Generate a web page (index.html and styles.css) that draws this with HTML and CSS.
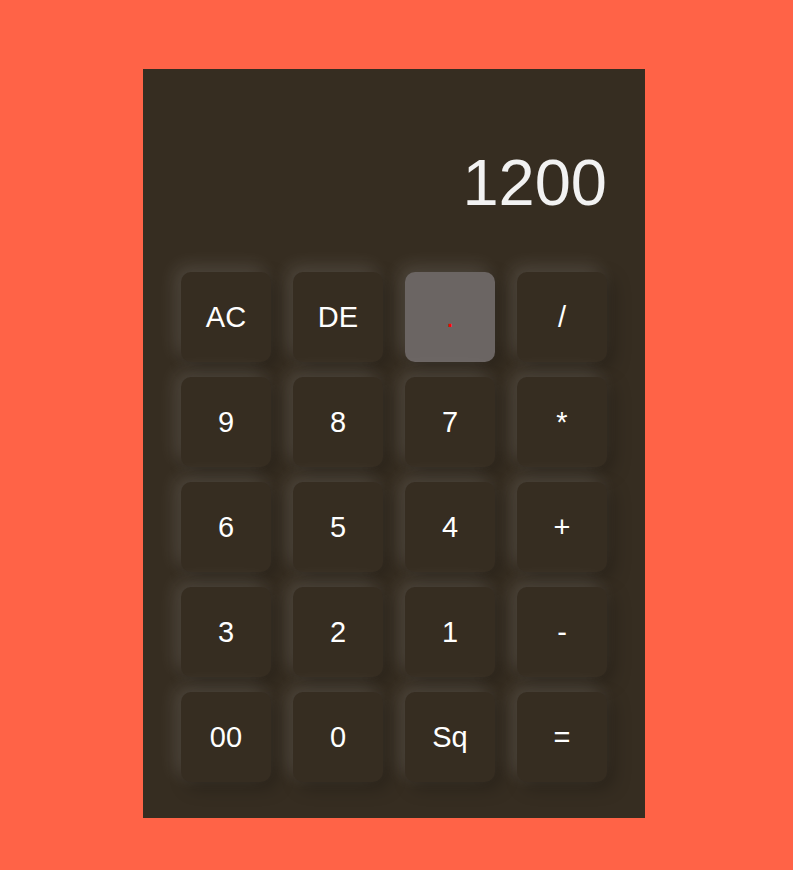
FILE: index.html
```html
<!DOCTYPE html>
<html>
<head>
<meta charset="utf-8">
<link rel="stylesheet" href="styles.css">
</head>
<body>
<div class="calculator">
  <div class="display">1200</div>
  <div class="keys">
    <button class="key">AC</button>
    <button class="key">DE</button>
    <button class="key key-active">.</button>
    <button class="key">/</button>
    <button class="key">9</button>
    <button class="key">8</button>
    <button class="key">7</button>
    <button class="key">*</button>
    <button class="key">6</button>
    <button class="key">5</button>
    <button class="key">4</button>
    <button class="key">+</button>
    <button class="key">3</button>
    <button class="key">2</button>
    <button class="key">1</button>
    <button class="key">-</button>
    <button class="key">00</button>
    <button class="key">0</button>
    <button class="key">Sq</button>
    <button class="key">=</button>
  </div>
</div>
</body>
</html>
```
FILE: styles.css
```css
html, body {
  margin: 0;
  padding: 0;
}
body {
  background: #ff6347;
  font-family: "Liberation Sans", Arial, sans-serif;
  height: 870px;
  padding-top: 69px;
  box-sizing: border-box;
}
.calculator {
  margin-left: 143px;
  width: 502px;
  height: 749px;
  box-sizing: border-box;
  padding: 38px 38px 36px;
  background: #362d21;
  display: flex;
  flex-direction: column;
}
.display {
  flex-shrink: 0;
  height: 150px;
  box-sizing: border-box;
  padding-top: 38px;
  margin-bottom: 15px;
  text-align: right;
  color: #f2f2f2;
  font-size: 65px;
  line-height: normal;
}
.keys {
  flex-shrink: 0;
  display: grid;
  grid-template-columns: repeat(4, 90px);
  grid-auto-rows: 90px;
  column-gap: 22px;
  row-gap: 15px;
}
.key {
  border: none;
  border-radius: 10px;
  background: #362d21;
  color: #ffffff;
  font-family: "Liberation Sans", Arial, sans-serif;
  font-size: 29px;
  padding: 0;
  box-shadow: -6px -6px 18px rgba(255, 255, 255, 0.13), 6px 6px 18px rgba(0, 0, 0, 0.25);
}
.key-active {
  background: #6b6563;
  color: #ff0000;
}
```
